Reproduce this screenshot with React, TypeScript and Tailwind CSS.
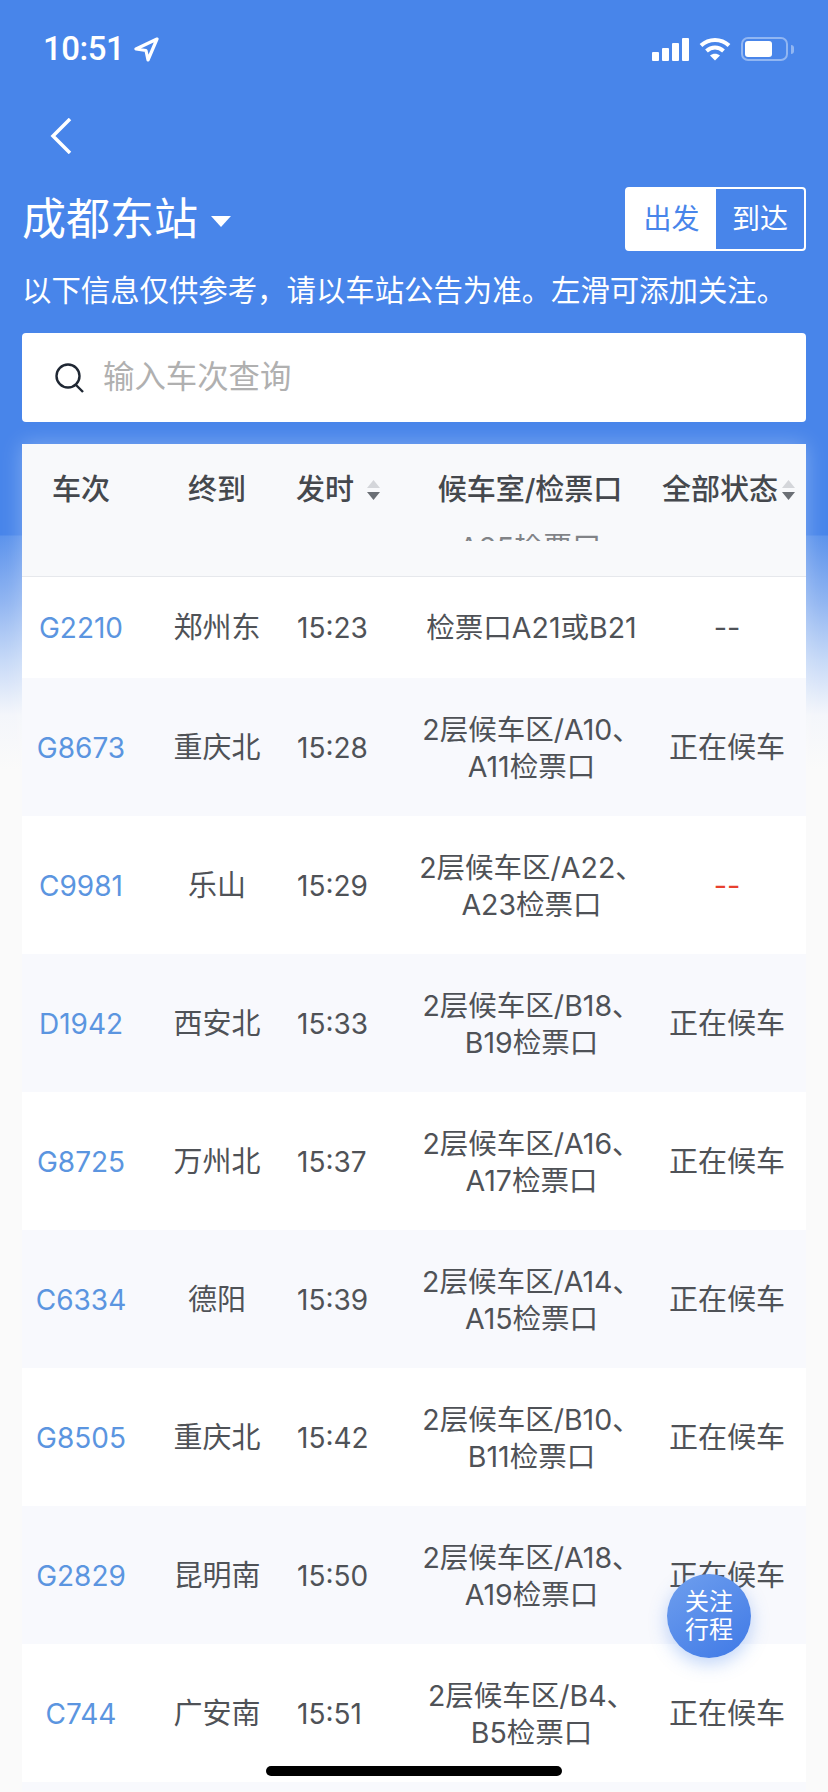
const rows = [
  { no: "G2210", to: "郑州东", time: "15:23", gate: ["检票口A21或B21"], status: "--" },
  { no: "G8673", to: "重庆北", time: "15:28", gate: ["2层候车区/A10、", "A11检票口"], status: "正在候车" },
  { no: "C9981", to: "乐山", time: "15:29", gate: ["2层候车区/A22、", "A23检票口"], status: "--", red: true },
  { no: "D1942", to: "西安北", time: "15:33", gate: ["2层候车区/B18、", "B19检票口"], status: "正在候车" },
  { no: "G8725", to: "万州北", time: "15:37", gate: ["2层候车区/A16、", "A17检票口"], status: "正在候车" },
  { no: "C6334", to: "德阳", time: "15:39", gate: ["2层候车区/A14、", "A15检票口"], status: "正在候车" },
  { no: "G8505", to: "重庆北", time: "15:42", gate: ["2层候车区/B10、", "B11检票口"], status: "正在候车" },
  { no: "G2829", to: "昆明南", time: "15:50", gate: ["2层候车区/A18、", "A19检票口"], status: "正在候车" },
  { no: "C744", to: "广安南", time: "15:51", gate: ["2层候车区/B4、", "B5检票口"], status: "正在候车" },
]

const cols = "grid grid-cols-[118px_154px_100px_272px_140px] items-center"

const SortIcon = () => (
  <svg width="15" height="20" viewBox="0 0 15 20" className="shrink-0">
    <path d="M7.5 0 14 8H1z" fill="#d4d6da" />
    <path d="M7.5 20 1 12h13z" fill="#6b6f75" />
  </svg>
)

const App = () => {
  return (
    <div className="relative w-[828px] h-[1792px] overflow-hidden bg-[linear-gradient(to_bottom,#4885ea_0px,#4885ea_535px,#5c93ec_536px,#8fb4f1_600px,#c6d9f7_660px,#f4f6fb_715px,#fafafa_770px)] font-['Inter','Noto_Sans_CJK_SC',sans-serif] text-white">
      {/* status bar */}
      <div className="flex justify-between items-center h-[50px] mt-[24px] pl-[43px] pr-[34px]">
        <div className="flex items-center gap-[10px]">
          <span className="text-[33px] font-medium tracking-[-0.5px] font-['Roboto',sans-serif]">10:51</span>
          <svg width="25" height="25" viewBox="0 0 25 25" fill="none" stroke="#fff" strokeWidth="3.2" strokeLinejoin="round">
            <path d="M23 2 2 12l10 1.5L14 23z" />
          </svg>
        </div>
        <div className="flex items-center gap-[10px]">
          <div className="flex items-end gap-[3px] h-[23px]">
            <div className="w-[7px] h-[9px] bg-white rounded-[1px]" />
            <div className="w-[7px] h-[13px] bg-white rounded-[1px]" />
            <div className="w-[7px] h-[18px] bg-white rounded-[1px]" />
            <div className="w-[7px] h-[23px] bg-white rounded-[1px]" />
          </div>
          <svg width="32" height="24" viewBox="0 0 32 24" fill="none" stroke="#fff" strokeWidth="4">
            <path d="M2 8.5c8-7.5 20-7.5 28 0" />
            <path d="M7.5 14c5-4.6 12-4.6 17 0" />
            <path d="M16 23.5 11 18.5c3-2.4 7-2.4 10 0z" fill="#fff" stroke="none" />
          </svg>
          <div className="flex items-center gap-[3px]">
            <div className="w-[47px] h-[24px] rounded-[7px] border-2 border-white/40 p-[2px]">
              <div className="w-[27px] h-full bg-white rounded-[3px]" />
            </div>
            <div className="w-[3px] h-[9px] bg-white/40 rounded-r-[3px]" />
          </div>
        </div>
      </div>

      {/* back */}
      <div className="pl-[50px] mt-[44px]">
        <svg width="22" height="36" viewBox="0 0 22 36" fill="none" stroke="#fff" strokeWidth="3.5">
          <path d="M20 1 3 18l17 17" />
        </svg>
      </div>

      {/* title row */}
      <div className="flex justify-between items-center h-[64px] mt-[33px] px-[22px]">
        <div className="flex items-center gap-[13px]">
          <span className="text-[44px] leading-none">成都东站</span>
          <svg width="20" height="11" viewBox="0 0 20 11" className="mt-[4px]">
            <path d="M0 0h20L10 11z" fill="#fff" />
          </svg>
        </div>
        <div className="flex w-[181px] h-[64px] border-2 border-white rounded-[4px] text-[28px]">
          <div className="w-[89px] bg-white text-[#4885ea] flex items-center justify-center">出发</div>
          <div className="flex-1 flex items-center justify-center">到达</div>
        </div>
      </div>

      <p className="mt-[20px] pl-[22px] text-[29.4px] leading-[40px] whitespace-nowrap">以下信息仅供参考，请以车站公告为准。左滑可添加关注。</p>

      {/* search */}
      <div className="mx-[22px] mt-[22px] h-[89px] bg-white rounded-[4px] flex items-center pl-[32px] gap-[18px]">
        <svg width="31" height="30" viewBox="0 0 31 30" fill="none" stroke="#1f2733" strokeWidth="2.4">
          <circle cx="14" cy="13" r="11.5" />
          <path d="m22 22 7 7" />
        </svg>
        <span className="text-[31.4px] text-[#b0b0b0]">输入车次查询</span>
      </div>

      {/* table */}
      <div className="mx-[22px] mt-[22px] shadow-[0_0_20px_rgba(255,255,255,0.3)] text-[29px] text-[#4f5257]">
        <div className="bg-[#f8f9fb]">
          <div className={`${cols} h-[90px] pt-[2px] font-medium text-[#45484d]`}>
            <div className="text-center">车次</div>
            <div className="text-center">终到</div>
            <div className="flex items-center gap-[12px] pl-[2px]">
              <span>发时</span>
              <SortIcon />
            </div>
            <div className="text-center">候车室/检票口</div>
            <div className="flex items-center justify-end gap-[3px] pr-[10px]">
              <span className="whitespace-nowrap">全部状态</span>
              <SortIcon />
            </div>
          </div>
          {/* row scrolled under the header, only a slice of it shows */}
          <div className="h-[43px] border-b border-[#e6e8ec]">
            <div className="h-[7px] overflow-hidden text-center w-[272px] ml-[372px] leading-[36px] opacity-70">
              <div className="mt-[-4px]">A25检票口</div>
            </div>
          </div>
        </div>

        {rows.map((row, index) => (
          <div
            key={row.no}
            className={`${cols} ${index === 0 ? "h-[101px]" : "h-[138px] pt-[2px]"} ${index % 2 === 0 ? "bg-white" : "bg-[#f8f9fd]"}`}
          >
            <div className="text-center text-[28px] text-[#5b95e0]">{row.no}</div>
            <div className="text-center">{row.to}</div>
            <div className="pl-[3px] text-[28px]">{row.time}</div>
            <div className="text-center text-[28.5px] leading-[37px] pl-[3px]">
              {row.gate.map((line) => (
                <div key={line} className="whitespace-nowrap">{line}</div>
              ))}
            </div>
            <div className={`text-center pr-[18px] ${row.red ? "text-[#e8402e]" : ""}`}>{row.status}</div>
          </div>
        ))}
        <div className="h-[9px] bg-[#f8f9fd]" />
      </div>

      {/* follow button */}
      <div className="absolute left-[667px] top-[1574px] w-[84px] h-[84px] rounded-full bg-[linear-gradient(145deg,#6f9fee,#3f79e6)] shadow-[0_6px_18px_rgba(72,133,234,0.35)] flex items-center justify-center text-center text-[24px] leading-[28px] text-white">
        关注
        <br />
        行程
      </div>

      {/* home indicator */}
      <div className="absolute left-[266px] top-[1766px] w-[296px] h-[10px] rounded-full bg-black" />
    </div>
  )
}

export default App
